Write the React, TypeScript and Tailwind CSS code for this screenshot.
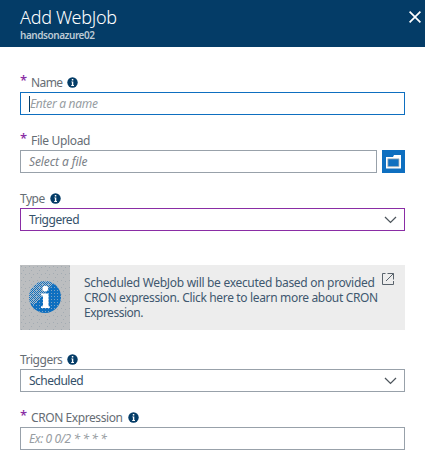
import type { ReactNode } from "react";

function InfoDot() {
  return (
    <svg width="11" height="11" viewBox="0 0 11 11" className="shrink-0">
      <circle cx="5.5" cy="5.5" r="5.2" fill="#043c67" />
      <path d="M4.3 4.4h2v3.7h.7v.8H4.2v-.8h.7V5.2h-.6z" fill="#fff" />
      <rect x="4.8" y="2" width="1.5" height="1.5" fill="#fff" />
    </svg>
  );
}

function Chevron() {
  return (
    <svg width="13" height="8" viewBox="0 0 13 8" className="mr-[7px] shrink-0" fill="none" stroke="#4d555c" strokeWidth="1.3">
      <path d="M1 1l5.5 5.4L12 1" />
    </svg>
  );
}

function Label({ children, required, info }: { children: ReactNode; required?: boolean; info?: boolean }) {
  return (
    <div className="flex h-5 items-center text-[12px] leading-5 text-[#666d74]">
      {required && (
        <span className="w-[11px] pb-[3px] font-['Open_Sans',sans-serif] text-[13px] leading-[17px] font-semibold text-[#8a2da5]">*</span>
      )}
      <span className="pt-[2px] leading-[18px]">{children}</span>
      {info && (
        <span className="ml-[5px]">
          <InfoDot />
        </span>
      )}
    </div>
  );
}

function Field({ children, border }: { children: ReactNode; border: string }) {
  return (
    <div className={`flex h-[23px] flex-1 items-center justify-between border pl-2 text-[12px] ${border}`}>
      {children}
    </div>
  );
}

export default function App() {
  return (
    <div className="h-[462px] w-[425px] overflow-hidden bg-white font-['Noto_Sans',sans-serif] whitespace-nowrap">
      <header className="flex h-[47px] justify-between bg-[#043c67] pl-5">
        <div className="flex flex-col pt-[5px]">
          <h1 className="h-6 text-[18px] leading-6 font-light text-white">
            <span className="tracking-[-0.3px]">Add WebJob</span>
          </h1>
          <p className="text-[10px] leading-3 font-semibold text-[#bccad5]">
            <span className="tracking-[-0.45px]">handsonazure02</span>
          </p>
        </div>
        <svg width="12" height="12" viewBox="0 0 12 12" className="mt-[11px] mr-[4px]" stroke="#fff" strokeWidth="1.7">
          <path d="M.6 .6l10.8 10.8M11.4 .6L.6 11.4" />
        </svg>
      </header>

      <main className="px-5 pt-[25px]">
        <Label required info>
          <span className="tracking-[-0.6px]">Name</span>
        </Label>
        <div className="flex">
          <Field border="border-[#0e6fc0]">
            <span className="flex items-center text-[#979da2] italic">
              <span className="h-4 w-px bg-[#043c67]" />
              <span className="tracking-[-0.3px]">Enter a name</span>
            </span>
          </Field>
        </div>

        <div className="mt-[15px]">
          <Label required>
            <span className="tracking-[-0.35px]">File Upload</span>
          </Label>
          <div className="flex gap-[5px]">
            <Field border="border-[#98a1aa]">
              <span className="text-[#7b8187] italic">
                <span className="tracking-[-0.1px]">Select a file</span>
              </span>
            </Field>
            <button className="flex h-[23px] w-[23px] items-center justify-center bg-[#0e6fc0]">
              <svg width="15" height="14" viewBox="0 0 15 14">
                <path d="M0 2h7l1-2h7v13.5H0z" fill="#fff" />
                <path d="M1.8 3.8h11.2v7.9H1.8z" fill="#0e6fc0" stroke="#b9bec0" strokeWidth=".8" />
              </svg>
            </button>
          </div>
        </div>

        <div className="mt-[15px]">
          <Label info>
            <span className="tracking-[-0.5px]">Type</span>
          </Label>
          <div className="flex">
            <Field border="border-[#8a2da5]">
              <span className="tracking-[-0.5px] text-[#35516a]">Triggered</span>
              <Chevron />
            </Field>
          </div>
        </div>

        <section className="mt-[34px] flex h-[65px] bg-[#ededed]">
          <div className="flex w-[50px] shrink-0 items-center justify-center bg-[#bcbec0]">
            <svg width="50" height="65" viewBox="0 0 50 65">
              <defs>
                <pattern id="speckle" width="8" height="7" patternUnits="userSpaceOnUse">
                  <path d="M1 1h1v1h-1zM5 2h1v1h-1zM3 5h1v1h-1z" fill="#a3abb2" />
                </pattern>
                <pattern id="checks" width="2" height="2" patternUnits="userSpaceOnUse">
                  <path d="M0 0h1v1H0zM1 1h1v1H1z" fill="#b0bcc6" />
                </pattern>
                <pattern id="dots" width="3" height="3" patternUnits="userSpaceOnUse">
                  <path d="M1 1h1v1H1z" fill="#7ba3c6" />
                </pattern>
              </defs>
              <rect width="50" height="65" fill="url(#speckle)" shapeRendering="crispEdges" />
              <circle cx="25" cy="32" r="16" fill="#0e6fc0" />
              <circle cx="25" cy="32" r="16" fill="url(#dots)" />
              <path d="M10 38a16 16 0 0 1 24-19.4L14 40z" fill="url(#checks)" />
              <circle cx="25.3" cy="23.6" r="2.8" fill="#fff" />
              <path d="M21 28.5h7.5v12.8h1.3V43H21v-1.7h2V30.5h-2z" fill="#fff" />
            </svg>
          </div>
          <div className="w-[311px] shrink-0 pt-[10px] pl-[14px] text-[12px] leading-[15px] text-[#3f586f]">
            <p className="tracking-[-0.3px]">Scheduled WebJob will be executed based on provided</p>
            <p className="tracking-[-0.34px]">CRON expression. Click here to learn more about CRON</p>
            <p className="tracking-[-0.5px]">Expression.</p>
          </div>
          <svg width="12" height="12" viewBox="0 0 12 12" className="mt-[8px] ml-px shrink-0" fill="none" stroke="#59636c" strokeWidth="1">
            <path d="M3.5 .5h-3v11h11V8M5.5 .5h6v6M11.5 .5L4 8" />
          </svg>
        </section>

        <div className="mt-[19px]">
          <Label info>
            <span className="tracking-[-0.5px]">Triggers</span>
          </Label>
          <div className="flex">
            <Field border="border-[#98a1aa]">
              <span className="tracking-[-0.5px] text-[#35516a]">Scheduled</span>
              <Chevron />
            </Field>
          </div>
        </div>

        <div className="mt-[15px]">
          <Label required info>
            <span className="tracking-[-0.42px]">CRON Expression</span>
          </Label>
          <div className="flex">
            <Field border="border-[#98a1aa]">
              <span className="text-[#979da2] italic">
                <span className="tracking-[-0.4px]">Ex: 0 0/2 * * * *</span>
              </span>
            </Field>
          </div>
        </div>
      </main>
    </div>
  );
}
